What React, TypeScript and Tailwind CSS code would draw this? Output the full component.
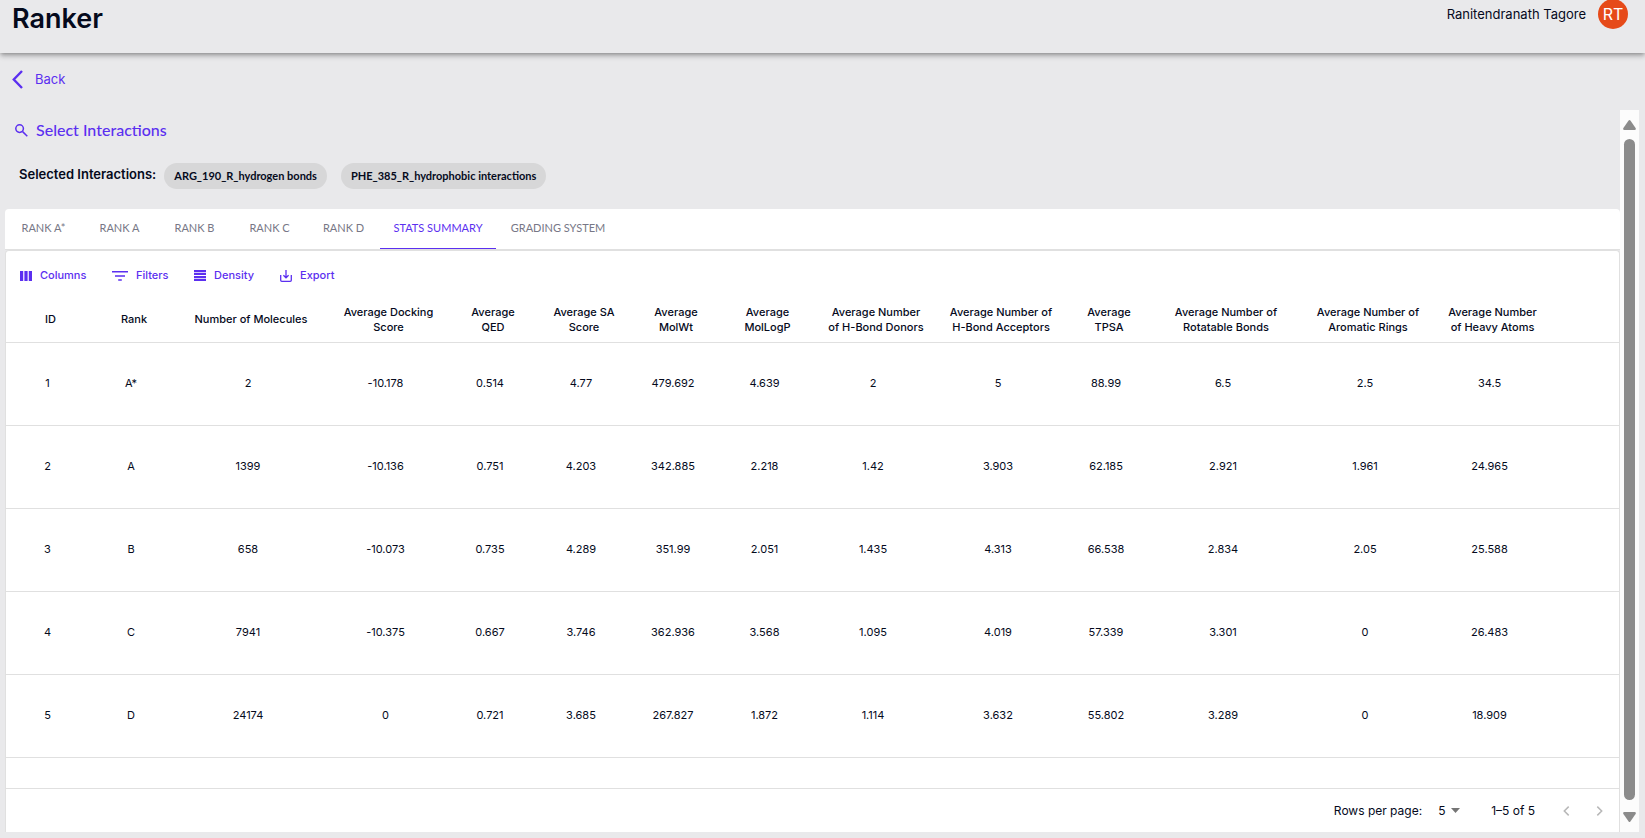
import React from "react";

const tabs = [
  { label: "RANK A*", width: "w-[77px]" },
  { label: "RANK A", width: "w-[75px]" },
  { label: "RANK B", width: "w-[75px]" },
  { label: "RANK C", width: "w-[75px]" },
  { label: "RANK D", width: "w-[73px]" },
  { label: "STATS SUMMARY", width: "w-[116px]" },
  { label: "GRADING SYSTEM", width: "w-[124px]" },
];
const activeTab = "STATS SUMMARY";

const columns: { lines: string[]; width: string }[] = [
  { lines: ["ID"], width: "w-[83px]" },
  { lines: ["Rank"], width: "w-[84px]" },
  { lines: ["Number of Molecules"], width: "w-[150px]" },
  { lines: ["Average Docking", "Score"], width: "w-[125px]" },
  { lines: ["Average", "QED"], width: "w-[84px]" },
  { lines: ["Average SA", "Score"], width: "w-[98px]" },
  { lines: ["Average", "MolWt"], width: "w-[86px]" },
  { lines: ["Average", "MolLogP"], width: "w-[97px]" },
  { lines: ["Average Number", "of H-Bond Donors"], width: "w-[120px]" },
  { lines: ["Average Number of", "H-Bond Acceptors"], width: "w-[130px]" },
  { lines: ["Average", "TPSA"], width: "w-[86px]" },
  { lines: ["Average Number of", "Rotatable Bonds"], width: "w-[148px]" },
  { lines: ["Average Number of", "Aromatic Rings"], width: "w-[136px]" },
  { lines: ["Average Number", "of Heavy Atoms"], width: "w-[113px]" },
];

const rows = [
  ["1", "A*", "2", "-10.178", "0.514", "4.77", "479.692", "4.639", "2", "5", "88.99", "6.5", "2.5", "34.5"],
  ["2", "A", "1399", "-10.136", "0.751", "4.203", "342.885", "2.218", "1.42", "3.903", "62.185", "2.921", "1.961", "24.965"],
  ["3", "B", "658", "-10.073", "0.735", "4.289", "351.99", "2.051", "1.435", "4.313", "66.538", "2.834", "2.05", "25.588"],
  ["4", "C", "7941", "-10.375", "0.667", "3.746", "362.936", "3.568", "1.095", "4.019", "57.339", "3.301", "0", "26.483"],
  ["5", "D", "24174", "0", "0.721", "3.685", "267.827", "1.872", "1.114", "3.632", "55.802", "3.289", "0", "18.909"],
];

function ColumnsIcon() {
  return (
    <svg width="12" height="10" viewBox="0 0 12 10" fill="currentColor" aria-hidden="true">
      <path d="M0 0h3.2v10H0zM4.4 0h3.2v10H4.4zM8.8 0H12v10H8.8z" />
    </svg>
  );
}

function FiltersIcon() {
  return (
    <svg width="16" height="10" viewBox="0 0 16 10" fill="currentColor" aria-hidden="true">
      <path d="M0 0h16v1.5H0zM3 4.2h10v1.5H3zM6.2 8.3h3.6v1.5H6.2z" />
    </svg>
  );
}

function DensityIcon() {
  return (
    <svg width="12" height="11" viewBox="0 0 12 11" fill="currentColor" aria-hidden="true">
      <path d="M0 0h12v2.200H0zM0 2.900h12v2.200H0zM0 5.900h12v2.200H0zM0 8.800h12V11H0z" />
    </svg>
  );
}

function ExportIcon() {
  return (
    <svg width="12" height="12" viewBox="0 0 12 12" fill="none" stroke="currentColor" strokeWidth="1.3" aria-hidden="true">
      <path d="M.7 5v5.2c0 .7.4 1.1 1.1 1.1h8.4c.7 0 1.1-.4 1.1-1.1V5M6 0v7.6M3.4 5.2 6 7.8l2.6-2.6" />
    </svg>
  );
}

const tools = [
  { label: "Columns", icon: <ColumnsIcon />, width: "w-[92px]" },
  { label: "Filters", icon: <FiltersIcon />, width: "w-[82px]" },
  { label: "Density", icon: <DensityIcon />, width: "w-[86px]" },
  { label: "Export", icon: <ExportIcon />, width: "w-[86px]" },
];

const chips = ["ARG_190_R_hydrogen bonds", "PHE_385_R_hydrophobic interactions"];

function ScrollTrack() {
  return (
    <div className="flex w-[19px] shrink-0 flex-col items-center bg-[#fcfcfc] py-2.5" aria-hidden="true">
      <svg width="13" height="10" viewBox="0 0 13 10" fill="#8b8b8b">
        <path d="M5.6.6q.9-1.1 1.8 0l5.200 7.500q.8 1.600-1 1.900H1.400q-1.800-.3-1-1.900z" />
      </svg>
      <div className="mt-[9px] mb-3 w-[11px] grow rounded-full bg-[#8b8b8b]" />
      <svg width="13" height="10" viewBox="0 0 13 10" fill="#8b8b8b">
        <path d="M5.600 9.400q.9 1.100 1.800 0l5.200-7.500q.8-1.600-1-1.900H1.400q-1.800.3-1 1.900z" />
      </svg>
    </div>
  );
}

export default function App() {
  return (
    <div className="flex min-h-screen flex-col bg-[#e9e9eb] font-['Inter','Liberation_Sans',sans-serif] text-[#050a1c]">
      <header className="flex h-[53px] items-start justify-between pr-[17px] pl-3 shadow-[0_2px_4px_-1px_rgba(0,0,0,0.3),0_4px_5px_0_rgba(0,0,0,0.12),0_1px_8px_0_rgba(0,0,0,0.08)]">
        <h1 className="pt-[3px] text-[27px] leading-8 font-semibold">Ranker</h1>
        <div className="flex items-start gap-3">
          <span className="pt-1 text-[13px] leading-5">Ranitendranath Tagore</span>
          <span className="-mt-px flex size-[30px] items-center justify-center rounded-full bg-[#e64a19] text-base text-white">
            RT
          </span>
        </div>
      </header>

      <nav className="flex h-[57px] items-start pt-4 pl-3">
        <a href="#back" className="flex items-center gap-3 text-[13px] leading-5 text-[#5b2ff0]">
          <svg width="11" height="19" viewBox="0 0 11 19" fill="none" stroke="currentColor" strokeWidth="2.400" aria-hidden="true">
            <path d="M10 1 1.800 9.500 10 18" />
          </svg>
          Back
        </a>
      </nav>

      <div className="flex grow pr-1.5 pb-1.5 pl-[5px]">
        <main className="flex min-w-0 flex-1 flex-col">
          <div className="flex h-[99px] flex-col items-start pt-2">
            <button type="button" className="ml-2.5 flex items-center gap-2 font-['Lato','Inter',sans-serif] text-base leading-6 font-medium text-[#5b2ff0]">
              <svg width="13" height="13" viewBox="0 0 13 13" fill="none" stroke="currentColor" strokeWidth="1.500" aria-hidden="true">
                <circle cx="4.600" cy="4.600" r="3.800" />
                <path d="m7.600 7.600 4.700 4.700" />
              </svg>
              Select Interactions
            </button>
            <div className="mt-[21px] ml-3.5 flex items-start">
              <span className="mr-2 text-[13px] leading-[23px] font-semibold">Selected Interactions:</span>
              <div className="flex gap-3.5 font-['Lato','Inter',sans-serif] text-[11px] leading-[26px] font-bold">
                {chips.map((chip) => (
                  <span key={chip} className="rounded-full bg-[#d7d7d8] px-2.5">
                    {chip}
                  </span>
                ))}
              </div>
            </div>
          </div>

          <div role="tablist" className="flex h-[41px] rounded-t border-b border-[#e0e0e0] bg-white font-['Lato','Inter',sans-serif]">
            {tabs.map((tab) => (
              <button
                key={tab.label}
                type="button"
                role="tab"
                aria-selected={tab.label === activeTab}
                className={`border-b text-[11px] whitespace-nowrap ${tab.width} ${
                  tab.label === activeTab ? "border-[#5b2ff0] text-[#5b2ff0]" : "border-transparent text-[#777786]"
                }`}
              >
                {tab.label}
              </button>
            ))}
          </div>

          <section className="flex grow flex-col rounded-t border border-b-0 border-[#e0e0e0] bg-white">
            <div className="flex h-[47px] items-center pt-0.5 pl-3.5 text-[11px] font-medium text-[#5b2ff0]">
              {tools.map((tool) => (
                <button key={tool.label} type="button" className={`flex items-center gap-2 whitespace-nowrap ${tool.width}`}>
                  {tool.icon}
                  {tool.label}
                </button>
              ))}
            </div>

            <table className="h-[460px] w-full table-fixed border-collapse text-center text-[11px] leading-[15px]">
              <thead>
                <tr className="h-11 border-b border-[#e0e0e0]">
                  {columns.map((column) => (
                    <th key={column.lines.join(" ")} scope="col" className={`pl-1.5 font-medium whitespace-nowrap ${column.width}`}>
                      {column.lines.map((line) => (
                        <span key={line} className="block">
                          {line}
                        </span>
                      ))}
                    </th>
                  ))}
                  <td />
                </tr>
              </thead>
              <tbody>
                {rows.map((row) => (
                  <tr key={row[0]} className="border-b border-[#e0e0e0]">
                    {row.map((value, i) => (
                      <td key={i}>{value}</td>
                    ))}
                    <td />
                  </tr>
                ))}
              </tbody>
            </table>

            <footer className="mt-auto flex h-11 items-center justify-end border-t border-[#e0e0e0] pr-4 text-xs">
              <label htmlFor="page-size">Rows per page:</label>
              <div className="relative ml-4 flex items-center">
                <select id="page-size" defaultValue="5" className="w-[22px] appearance-none bg-transparent text-xs">
                  <option value="5">5</option>
                  <option value="10">10</option>
                </select>
                <svg width="9" height="5" viewBox="0 0 9 5" fill="#757575" className="pointer-events-none absolute right-0" aria-hidden="true">
                  <path d="M0 0h9L4.500 5z" />
                </svg>
              </div>
              <span className="ml-[31px]">1–5 of 5</span>
              <button type="button" aria-label="Previous page" className="ml-7 text-[#b8b8b8]" disabled>
                <svg width="7" height="10" viewBox="0 0 7 10" fill="none" stroke="currentColor" strokeWidth="1.500" aria-hidden="true">
                  <path d="M5.700.6 1.300 5l4.400 4.400" />
                </svg>
              </button>
              <button type="button" aria-label="Next page" className="ml-[26px] text-[#b8b8b8]" disabled>
                <svg width="7" height="10" viewBox="0 0 7 10" fill="none" stroke="currentColor" strokeWidth="1.500" aria-hidden="true">
                  <path d="M1.300.6 5.700 5 1.300 9.400" />
                </svg>
              </button>
            </footer>
          </section>
        </main>
        <ScrollTrack />
      </div>
    </div>
  );
}
